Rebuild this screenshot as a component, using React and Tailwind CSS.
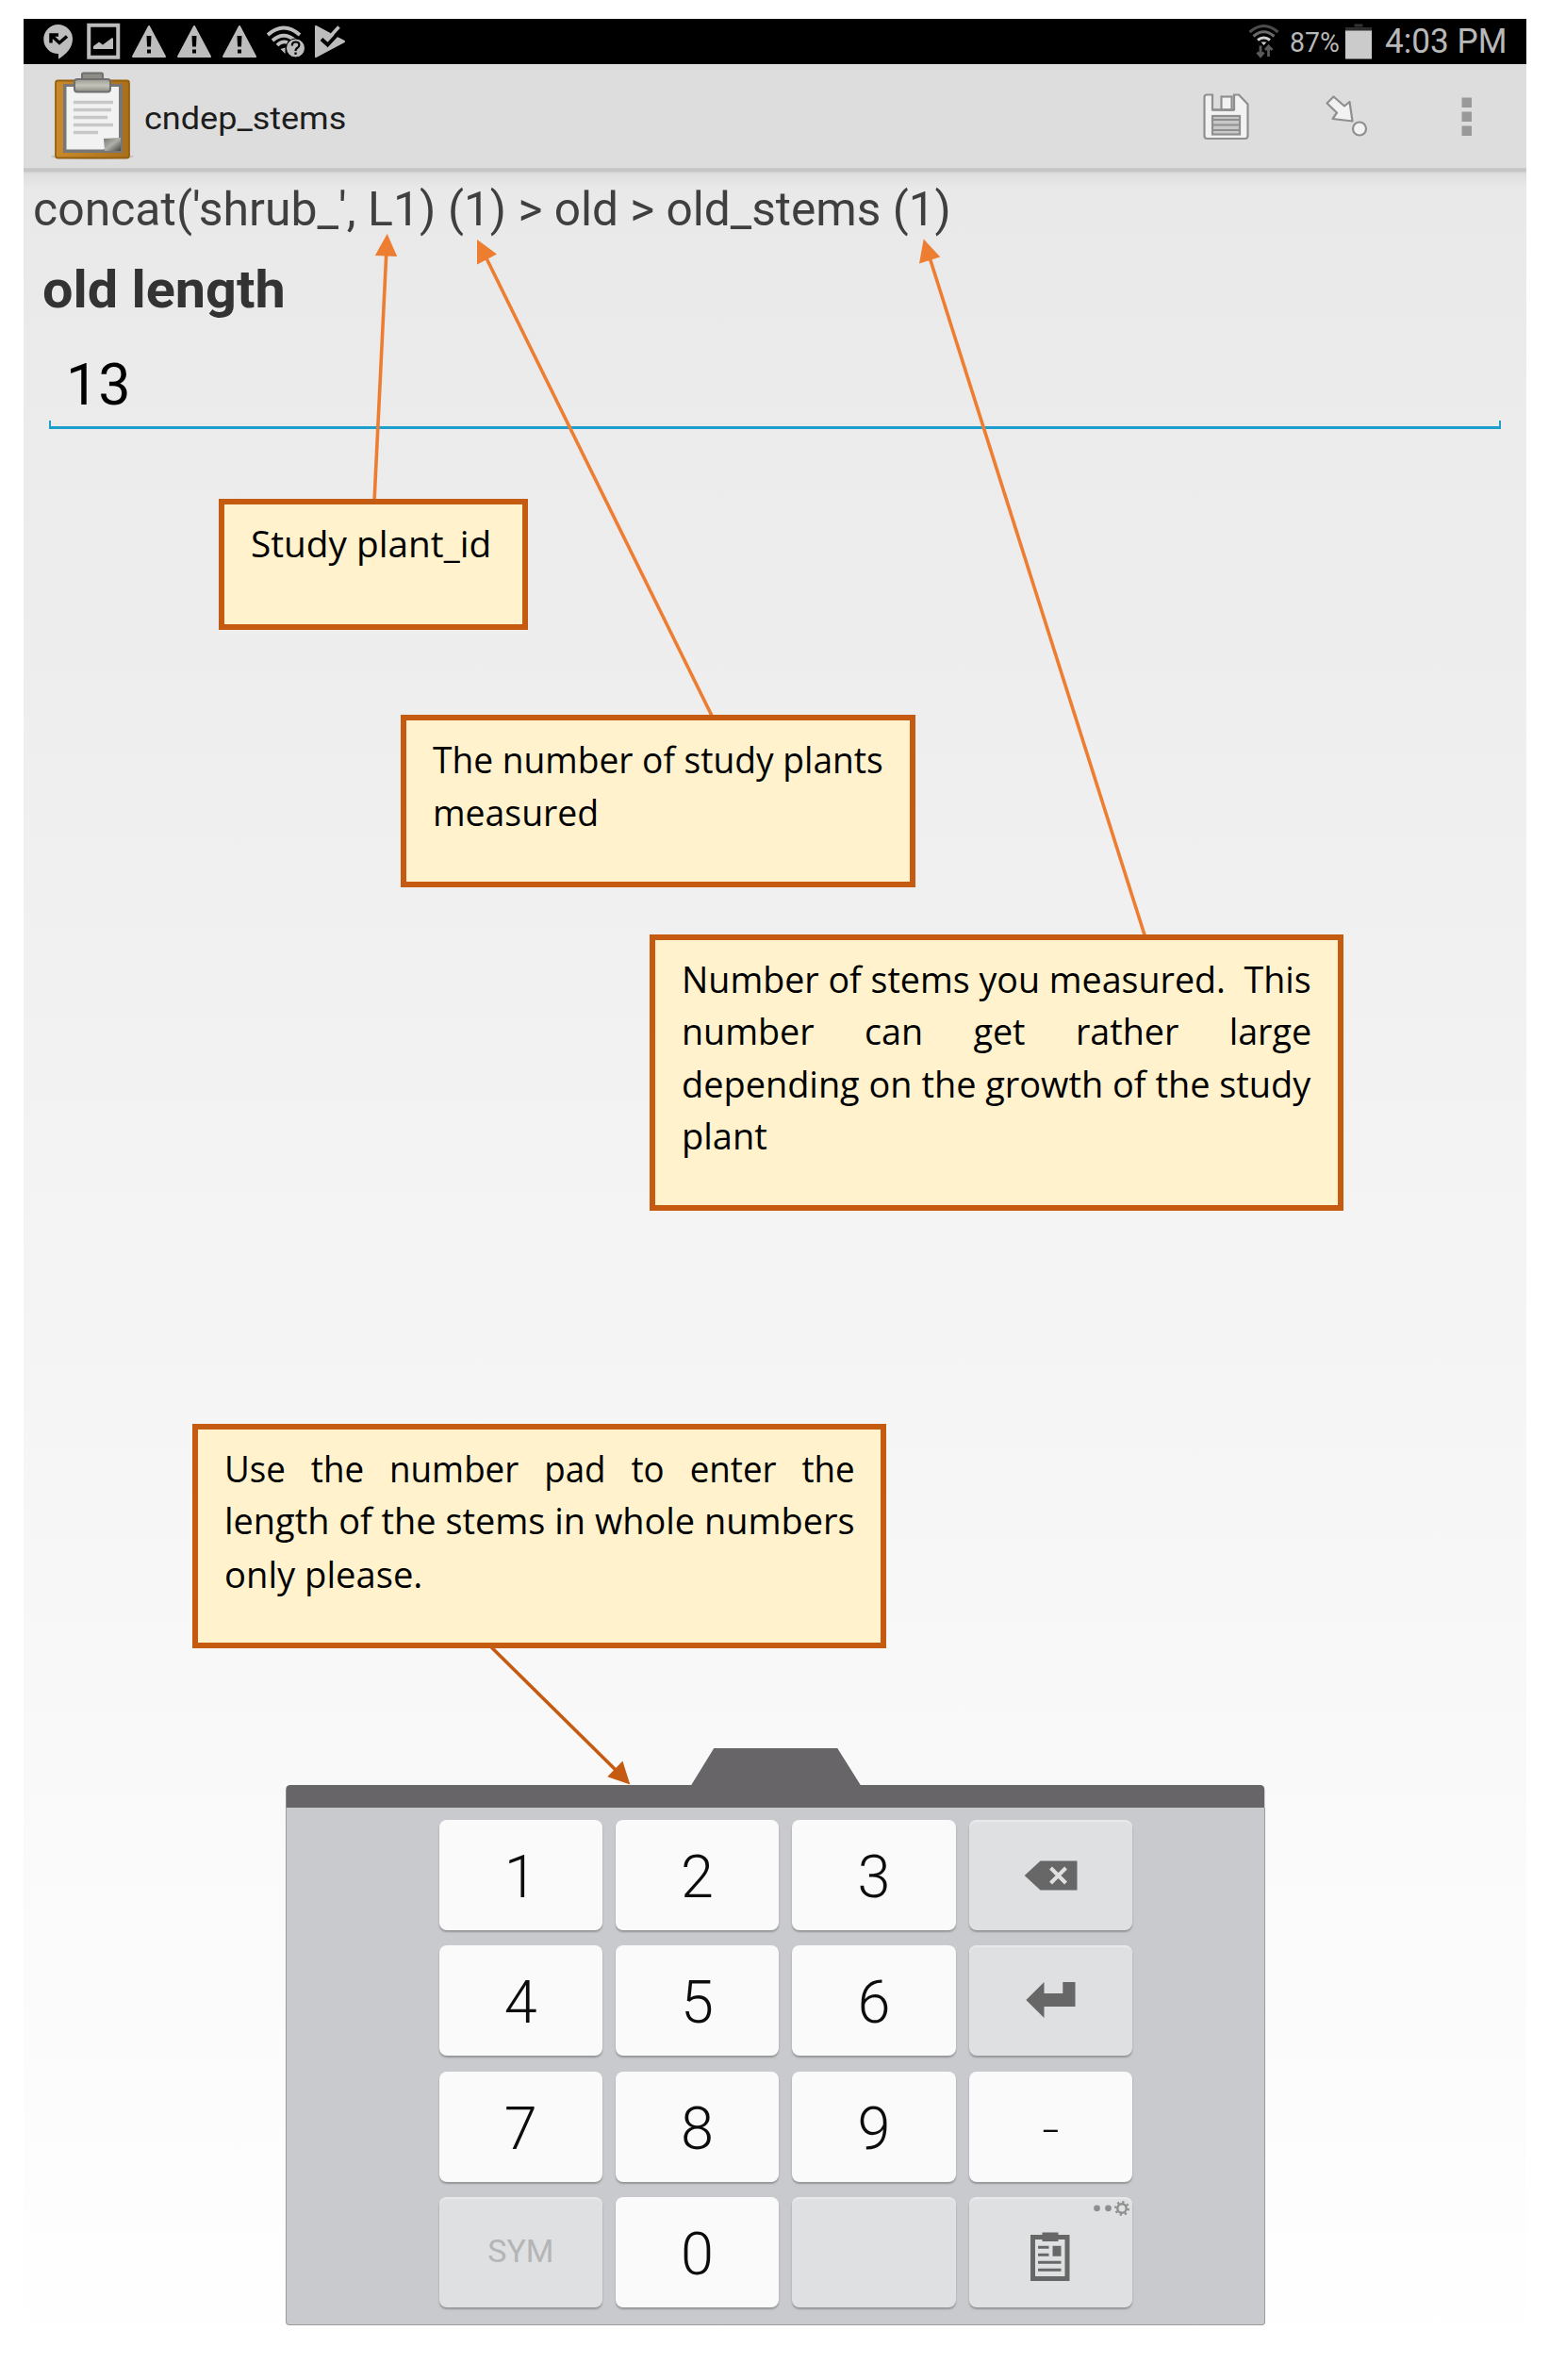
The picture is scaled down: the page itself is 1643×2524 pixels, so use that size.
import { useLayoutEffect, useRef, useState } from "react";

/* Stretches one line of text to an exact width. */
function FitText({ width, className = "", children }) {
  const ref = useRef(null);
  const [scale, setScale] = useState(1);
  useLayoutEffect(() => {
    setScale(width / ref.current.offsetWidth);
  }, [width]);
  return (
    <div style={{ width }}>
      <span
        ref={ref}
        className={`inline-block origin-left whitespace-pre align-top ${className}`}
        style={{ transform: `scaleX(${scale})` }}
      >
        {children}
      </span>
    </div>
  );
}

function Icon({ x, y, w, h, className = "", children }) {
  return (
    <svg width={w} height={h} viewBox={`${x} ${y} ${w} ${h}`} className={`block shrink-0 ${className}`}>
      {children}
    </svg>
  );
}

function Warning({ className }) {
  return (
    <Icon x={139} y={24} w={38} h={40} className={className}>
      <path d="M158 28 L175 60 H141 Z" fill="#bdbdbd" stroke="#bdbdbd" strokeWidth="2" strokeLinejoin="round" />
      <path d="M155.500 38 h5 l-.5 11.500 h-4 z M156 52.500 h4 v4 h-4 z" fill="#000" />
    </Icon>
  );
}

function StatusBar() {
  return (
    <div className="flex h-12 items-center bg-black">
      <Icon x={45} y={24} w={33} h={40} className="ml-5">
        <path d="M61.500 26 a15.500 15.500 0 0 1 15.500 15.500 c0 9 -7 16.500 -15 21 v-5.500 a15.500 15.500 0 0 1 -.5 -31 z" fill="#bdbdbd" />
        <path d="M54 45.500 V37 H62 M54.500 37.500 L63 45.500 L71 38.500" fill="none" stroke="#000" strokeWidth="3.500" />
      </Icon>
      <Icon x={92} y={24} w={36} h={40} className="ml-3.5">
        <rect x="94.250" y="26.750" width="31" height="34" fill="none" stroke="#bdbdbd" strokeWidth="4" />
        <path d="M99 52 v-3 l6-4.500 4 3 10-7.500 1 1 v11 z" fill="#bdbdbd" />
      </Icon>
      <Warning className="ml-[11px]" />
      <Warning className="ml-2.5" />
      <Warning className="ml-2.5" />
      <Icon x={283} y={24} w={42} h={40} className="ml-2.5">
        <g fill="none" stroke="#bdbdbd" strokeWidth="3.800">
          <path d="M284 37 Q301 22 318 37" />
          <path d="M289 43 Q301 32.500 313 43" />
          <path d="M294 48 Q299 43 305 45" />
        </g>
        <path d="M297.500 52 l5-1.500 v6.500 z" fill="#bdbdbd" />
        <circle cx="313.500" cy="51" r="10" fill="#bdbdbd" stroke="#000" strokeWidth="1" />
        <path d="M309.800 48.500 q0-4 3.700-4 q3.900 0 3.900 3.300 q0 2-2.300 3.200 q-1.600 1-1.600 3" fill="none" stroke="#000" strokeWidth="2.200" />
        <rect x="312.400" y="55.500" width="2.300" height="2.300" fill="#000" />
      </Icon>
      <Icon x={333} y={24} w={34} h={40} className="ml-2">
        <path d="M335 28 L365 44 L335 60 Z" fill="#bdbdbd" stroke="#bdbdbd" strokeWidth="2" strokeLinejoin="round" />
        <path d="M350 35 L358 26 L368 38 L360 40 Z" fill="#000" />
        <path d="M341 41.500 L347.500 47.500 L362 32" fill="none" stroke="#000" strokeWidth="4" />
        <path d="M345 38.500 L348 41 L359.500 28.500" fill="none" stroke="#bdbdbd" strokeWidth="3.500" />
      </Icon>
      <Icon x={1324} y={24} w={34} h={40} className="ml-[957px]">
        <g fill="none" strokeWidth="3">
          <path d="M1325.500 34 Q1340.500 21 1355.500 34" stroke="#4c4c4c" />
          <path d="M1329.500 38.500 Q1340.500 29 1351.500 38.500" stroke="#6a6a6a" />
          <path d="M1334 42.500 Q1340.500 37.500 1347 42.500" stroke="#d0d0d0" />
        </g>
        <path d="M1337.500 44.500 h6 l-3 3.500 z" fill="#d0d0d0" />
        <path d="M1337 48.500 V59 M1333.500 55.500 L1337 59.500 L1340.500 55.500 M1345.500 60 V49.500 M1342 53 L1345.500 49 L1349.500 53" fill="none" stroke="#5a5a5a" strokeWidth="2.800" />
      </Icon>
      <div className="ml-2.5 text-[29px] leading-9 text-[#b8b8b8]">
        <FitText width={53} className="mt-0.5">87%</FitText>
      </div>
      <Icon x={1426} y={23} w={30} h={40} className="ml-[5px]">
        <rect x="1436.500" y="24.500" width="9" height="3" fill="#333" />
        <rect x="1427" y="28" width="28" height="4" fill="#2e2e2e" />
        <rect x="1427" y="31.500" width="28" height="30" fill="#cbcbcb" />
      </Icon>
      <div className="ml-[13px] text-[36px] leading-10 text-[#b8b8b8]">
        <FitText width={130}>4:03 PM</FitText>
      </div>
    </div>
  );
}

function ActionBar() {
  return (
    <div className="flex h-[110px] items-center bg-[#dddddd]">
      <Icon x={54} y={70} w={90} h={104} className="ml-[29px]">
        <defs>
          <linearGradient id="board" x1="0" y1="0" x2="1" y2="0">
            <stop offset="0" stopColor="#c98a2b" />
            <stop offset="1" stopColor="#a86f1c" />
          </linearGradient>
          <linearGradient id="clip" x1="0" y1="0" x2="0" y2="1">
            <stop offset="0" stopColor="#9c9c94" />
            <stop offset="0.500" stopColor="#c4c4ba" />
            <stop offset="1" stopColor="#8a8a84" />
          </linearGradient>
          <linearGradient id="curl" x1="0" y1="0" x2="1" y2="1">
            <stop offset="0" stopColor="#77776f" />
            <stop offset="0.500" stopColor="#b0b0aa" />
            <stop offset="1" stopColor="#444440" />
          </linearGradient>
        </defs>
        <ellipse cx="98" cy="165" rx="44" ry="3" fill="#c4c4c4" />
        <rect x="59" y="84.500" width="78" height="82" rx="2.500" fill="url(#board)" stroke="#95600f" strokeWidth="1.800" />
        <rect x="67" y="88" width="63" height="73" fill="#777" />
        <path d="M70.500 91 H126 V146 L110 157.500 H70.500 Z" fill="#f2f2f2" />
        <path d="M110 146 L128 145 V159 H111 Z" fill="url(#curl)" />
        <path d="M78 107.500 h42 M78 115.500 h40 M78 123.500 h36 M78 131.500 h42 M78 139.500 h26" stroke="#c8c8c8" strokeWidth="3.500" />
        <rect x="87" y="76.500" width="22" height="10" rx="1.500" fill="#8d8d86" stroke="#6f6f6f" strokeWidth="2" />
        <rect x="79" y="83" width="38" height="13.500" rx="3" fill="url(#clip)" stroke="#6f6f6f" strokeWidth="2" />
      </Icon>
      <div className="ml-[9px] text-[34px] leading-10 text-[#1c1c1c]">
        <FitText width={214} className="mt-[3px]">cndep_stems</FitText>
      </div>
      <Icon x={1274} y={96} w={54} h={56} className="ml-[907px] mt-px">
        <path d="M1280 100.500 H1286 V116.500 H1309 V100.500 H1314 L1323.500 110.500 V144 q0 3 -3 3 H1280.500 q-3 0 -3-3 V103 q0-2.500 2.500-2.500 z" fill="#f2f2f2" stroke="#8f8f8f" strokeWidth="2.200" />
        <rect x="1295.500" y="102.500" width="11" height="14" fill="#f2f2f2" stroke="#8f8f8f" strokeWidth="2.200" />
        <path d="M1286 116.500 h23" stroke="#8f8f8f" strokeWidth="2.500" />
        <rect x="1286" y="123" width="29" height="19.500" fill="#c8c8c8" stroke="#8f8f8f" strokeWidth="2.200" />
        <path d="M1287 127 h27 M1287 132.500 h27 M1287 138 h27" stroke="#8f8f8f" strokeWidth="2" />
      </Icon>
      <Icon x={1404} y={96} w={50} h={56} className="ml-[76px] mt-px">
        <path d="M1414.500 102.500 L1426 112.500 L1431.500 108 L1434.500 128.500 L1413.500 126 L1418 119.500 L1407.500 109.500 Z" fill="#f2f2f2" stroke="#8f8f8f" strokeWidth="2.200" strokeLinejoin="round" />
        <circle cx="1442" cy="136.500" r="7" fill="#f2f2f2" stroke="#8f8f8f" strokeWidth="2.200" />
      </Icon>
      <Icon x={1548} y={96} w={16} h={56} className="ml-[94px] mt-px">
        <path d="M1550.500 103.500 h10.500 v10.500 h-10.500 z M1550.500 118.500 h10.500 v10.500 h-10.500 z M1550.500 133.500 h10.500 v10.500 h-10.500 z" fill="#999" />
      </Icon>
    </div>
  );
}

function Key({ tone = "light", children }) {
  return (
    <div
      className={
        tone === "light"
          ? "relative flex h-[117px] items-center justify-center rounded-lg bg-[#fafafa] text-[63px] font-light leading-none text-[#0c0c0c] shadow-[0_2px_2px_#939495]"
          : "relative flex h-[117px] items-center justify-center rounded-lg bg-[#dfe0e2] text-[34px] leading-none text-[#b4b5b6] shadow-[0_2px_2px_#939495,inset_0_2px_1px_#e8e9ea]"
      }
    >
      {children}
    </div>
  );
}

function Digit({ children }) {
  return <span className="pt-1">{children}</span>;
}

function Keypad() {
  return (
    <div className="ml-[278px] mt-[1399px] w-[1038.500px]">
      <svg width="1038" height="63" viewBox="303 1854 1038 63" className="block w-full">
        <path d="M303 1917 V1898 q0-5 5-5 H733 L757 1854 H888 L912.500 1893 H1336 q5 0 5 5 V1917 Z" fill="#676568" />
      </svg>
      <div className="h-[549px] rounded-b-[4px] border border-t-0 border-[#9c9c9e] bg-[#c9cace] pt-[12.500px]">
        <div className="ml-[161.500px] grid w-[735.500px] grid-cols-4 gap-x-3.5 gap-y-[16.500px]">
          <Key><Digit>1</Digit></Key>
          <Key><Digit>2</Digit></Key>
          <Key><Digit>3</Digit></Key>
          <Key tone="dark">
            <Icon x={1086} y={1972} w={57} h={33}>
              <path d="M1086.700 1989 L1103.500 1973.500 H1142.500 V2004.500 H1103.500 Z" fill="#676767" />
              <path d="M1114.500 1981 L1130.500 1997 M1130.500 1981 L1114.500 1997" stroke="#dfe0e2" strokeWidth="4" />
            </Icon>
          </Key>
          <Key><Digit>4</Digit></Key>
          <Key><Digit>5</Digit></Key>
          <Key><Digit>6</Digit></Key>
          <Key tone="dark">
            <Icon x={1088} y={2102} w={53} h={38} className="mb-0.5">
              <path d="M1088.300 2121 L1107.500 2102 V2114 H1127.300 V2102 H1140.500 V2128 H1107.500 V2140 Z" fill="#676767" />
            </Icon>
          </Key>
          <Key><Digit>7</Digit></Key>
          <Key><Digit>8</Digit></Key>
          <Key><Digit>9</Digit></Key>
          <Key><span className="scale-x-140 pt-1.5 text-[46px] font-light">-</span></Key>
          <Key tone="dark">
            <FitText width={70} className="-mt-0.5">SYM</FitText>
          </Key>
          <Key><Digit>0</Digit></Key>
          <Key tone="dark" />
          <Key tone="dark">
            <Icon x={1093} y={2365} w={44} h={54} className="mt-2">
              <rect x="1096.500" y="2371.500" width="36.500" height="44" fill="none" stroke="#676767" strokeWidth="5" />
              <path d="M1106.500 2366.500 h17 v9.500 h-17 z M1102 2380.800 h11.500 v3 h-11.500 z M1102 2388.800 h11.500 v3 h-11.500 z M1117.500 2380.800 h9 v11 h-9 z M1102 2396.800 h24.500 v3 h-24.500 z M1102 2404.800 h24.500 v3 h-24.500 z" fill="#676767" />
            </Icon>
            <svg width="40" height="20" viewBox="1160 2332 40 20" className="absolute right-[1px] top-[2px]">
              <circle cx="1163.500" cy="2341.800" r="3.400" fill="#8f8f8f" />
              <circle cx="1175.500" cy="2341.800" r="3.400" fill="#8f8f8f" />
              <circle cx="1190" cy="2342" r="4.700" fill="none" stroke="#8f8f8f" strokeWidth="2.400" />
              <circle cx="1190" cy="2342" r="6.800" fill="none" stroke="#8f8f8f" strokeWidth="2.400" strokeDasharray="2.300 3.040" />
            </svg>
          </Key>
        </div>
      </div>
    </div>
  );
}

function Callout({ className, children }) {
  return (
    <div
      className={`absolute border-[6px] border-[#c55a11] bg-[#fff2cd] font-['Open_Sans',sans-serif] text-[38px] leading-[55px] text-black ${className}`}
    >
      {children}
    </div>
  );
}

function Annotations() {
  return (
    <>
      <svg width="1643" height="2524" viewBox="0 0 1643 2524" className="pointer-events-none absolute left-0 top-0">
        <g stroke="#ed7d31" strokeWidth="3.600" fill="none">
          <path d="M397 532 L409.800 268" />
          <path d="M755.500 760 L515 272" />
          <path d="M1214.500 993 L986 273" />
        </g>
        <g fill="#ed7d31">
          <path d="M410.700 248 L421.200 272 L397.800 271 Z" />
          <path d="M506 254 L527 269.500 L506 280.500 Z" />
          <path d="M979.700 253.500 L997.200 272.500 L975 279.500 Z" />
        </g>
        <path d="M520.300 1746 L655 1879" stroke="#c55a11" strokeWidth="3.600" />
        <path d="M668.300 1892.500 L660.400 1867.500 L644.300 1884.300 Z" fill="#c55a11" />
      </svg>
      <Callout className="left-[232px] top-[529px] h-[139px] w-[328px] pl-7 pt-3.5">
        <FitText width={255}>Study plant_id</FitText>
      </Callout>
      <Callout className="left-[425px] top-[758px] h-[183px] w-[546px] pl-7 pt-3.5">
        <FitText width={478}>The number of study plants</FitText>
        <FitText width={176} className="mt-px">measured</FitText>
      </Callout>
      <Callout className="left-[689px] top-[991px] h-[293px] w-[736px] pl-7 pt-3.5">
        <FitText width={668}>{"Number of stems you measured.  This"}</FitText>
        <FitText width={668} className="[word-spacing:44px]">number can get rather large</FitText>
        <FitText width={667} className="mt-px">depending on the growth of the study</FitText>
        <FitText width={91}>plant</FitText>
      </Callout>
      <Callout className="left-[204px] top-[1510px] h-[238px] w-[736px] pl-7 pt-3.5">
        <FitText width={669} className="[word-spacing:18px]">Use the number pad to enter the</FitText>
        <FitText width={669}>length of the stems in whole numbers</FitText>
        <FitText width={210} className="mt-0.5">only please.</FitText>
      </Callout>
    </>
  );
}

export default function App() {
  return (
    <div className="relative h-[2524px] w-[1643px] overflow-hidden bg-white pl-[25px] pt-5 font-['Roboto',sans-serif]">
      <div className="w-[1594px]">
        <StatusBar />
        <ActionBar />
        <div className="h-[2340px] bg-[linear-gradient(#cbcbcb_0px,#c3c3c3_3px,#dedede_6px,#e9e9e9_22px,#ffffff_100%)] pt-3.5">
          <div className="ml-2.5 flex text-[49.500px] leading-[60px] text-[#3f3f3f]">
            <FitText width={440}>{"concat('shrub_', L1) "}</FitText>
            <FitText width={534}>{"(1) > old > old_stems (1)"}</FitText>
          </div>
          <div className="ml-5 mt-[23px] text-[56px] font-bold leading-[64px] text-[#333333]">
            <FitText width={258}>old length</FitText>
          </div>
          <div className="ml-[27px] mt-[33px] flex w-[1540px] flex-col text-[62px] leading-[72px] text-black">
            <div className="h-[74px] pl-[18px]">
              <FitText width={69}>13</FitText>
            </div>
            <div className="h-[9px] border-2 border-b-[3px] border-t-0 border-[#1d9fce]" />
          </div>
          <Keypad />
        </div>
      </div>
      <Annotations />
    </div>
  );
}
